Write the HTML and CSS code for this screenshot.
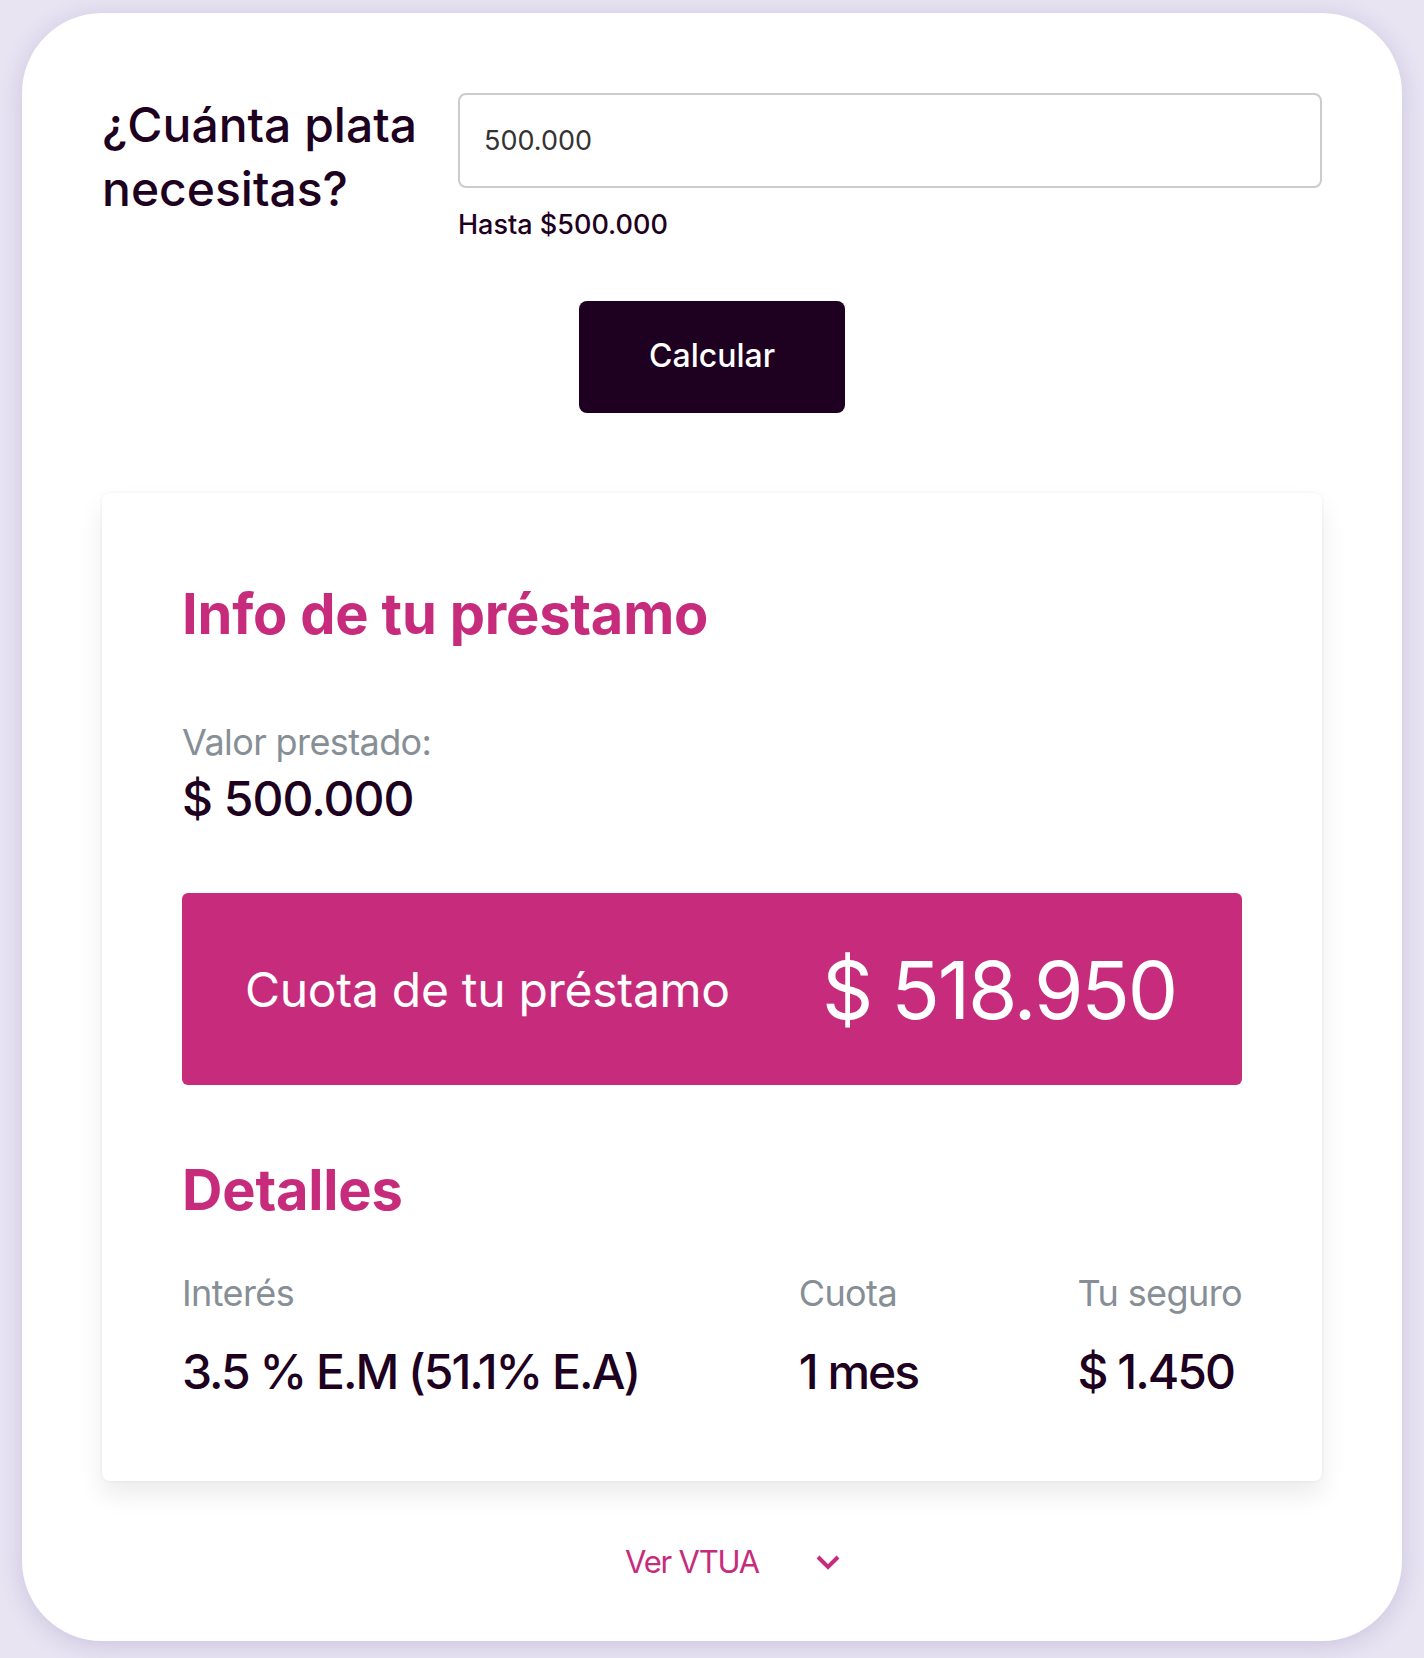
FILE: index.html
```html
<!DOCTYPE html>
<html lang="es">
<head>
    <meta charset="UTF-8">
    <meta name="viewport" content="width=device-width, initial-scale=1.0">
    <title>Simulador de préstamo</title>
    <link rel="stylesheet" href="styles.css">
</head>
<body>
    <div class="simulator">
        <div class="amount-row">
            <h1 class="amount-title">¿Cuánta plata necesitas?</h1>
            <div class="amount-field">
                <input type="text" id="amount" value="500.000">
                <p class="amount-hint">Hasta $500.000</p>
            </div>
        </div>

        <div class="actions">
            <button class="btn-calc">Calcular</button>
        </div>

        <div class="loan-card">
            <h2 class="section-title">Info de tu préstamo</h2>

            <p class="label">Valor prestado:</p>
            <p class="value">$ 500.000</p>

            <div class="installment">
                <span class="installment-label">Cuota de tu préstamo</span>
                <span class="installment-value">$ 518.950</span>
            </div>

            <h2 class="section-title details-title">Detalles</h2>

            <div class="details">
                <div class="detail">
                    <p class="label">Interés</p>
                    <p class="value">3.5 % E.M (51.1% E.A)</p>
                </div>
                <div class="detail">
                    <p class="label">Cuota</p>
                    <p class="value">1 mes</p>
                </div>
                <div class="detail">
                    <p class="label">Tu seguro</p>
                    <p class="value">$ 1.450</p>
                </div>
            </div>
        </div>

        <div class="vtua">
            <span>Ver VTUA</span>
            <svg width="26" height="18" viewBox="0 0 26 18">
                <path d="M3 3 L13 13 L23 3" fill="none" stroke="#c72c7c" stroke-width="4"/>
            </svg>
        </div>
    </div>
</body>
</html>
```

FILE: styles.css
```css
body {
    margin: 0;
    background-color: #e8e4f2;
    font-family: Inter, "Noto Sans", sans-serif;
    color: #1e0020;
}

p {
    margin: 0;
}

.simulator {
    width: 1380px;
    box-sizing: border-box;
    margin: 13px 22px 18px;
    padding: 80px 80px 59px;
    background: white;
    border-radius: 80px;
    box-shadow: 0 4px 24px rgba(90, 70, 150, 0.2);
}

.amount-row {
    display: flex;
}

.amount-title {
    width: 356px;
    margin: 0;
    font-size: 48px;
    line-height: 64px;
    font-weight: 500;
    letter-spacing: 0;
}

.amount-field {
    flex: 1;
}

.amount-field input {
    display: block;
    width: 100%;
    height: 95px;
    box-sizing: border-box;
    padding: 0 24px;
    border: 2px solid #cccccc;
    border-radius: 8px;
    font-family: Inter, sans-serif;
    font-size: 27px;
    color: #333;
}

.amount-hint {
    margin-top: 21px;
    font-size: 27px;
    line-height: 1.2;
    font-weight: 500;
}

.actions {
    display: flex;
    justify-content: center;
    margin-top: 60px;
}

.btn-calc {
    width: 266px;
    height: 112px;
    padding: 0 0 4px;
    background-color: #1e0020;
    color: white;
    border: none;
    border-radius: 8px;
    font-family: Inter, sans-serif;
    font-size: 32px;
    font-weight: 500;
    cursor: pointer;
}

.loan-card {
    margin-top: 80px;
    padding: 88px 80px 81px 80px;
    border-radius: 8px;
    background: white;
    box-shadow: 0 14px 26px rgba(0, 0, 0, 0.08), 0 0 4px rgba(0, 0, 0, 0.06);
}

.section-title {
    margin: 0;
    font-size: 56px;
    line-height: 1.2;
    font-weight: 700;
    color: #c72c7c;
    letter-spacing: -0.2px;
}

.label {
    margin-top: 72px;
    font-size: 36px;
    line-height: 1.2;
    color: #868e96;
    letter-spacing: -0.6px;
}

.value {
    margin-top: 6px;
    font-size: 48px;
    line-height: 1.2;
    font-weight: 500;
    letter-spacing: -1px;
}

.installment {
    display: flex;
    justify-content: space-between;
    align-items: center;
    height: 192px;
    margin-top: 66px;
    padding: 0 66px 0 63px;
    background-color: #c72c7c;
    border-radius: 6px;
    color: white;
}

.installment-label {
    font-size: 48px;
    letter-spacing: -0.3px;
}

.installment-value {
    font-size: 80px;
    letter-spacing: -2.2px;
}

.details-title {
    margin-top: 72px;
}

.details {
    display: flex;
    justify-content: space-between;
    margin-top: 47px;
}

.details .label {
    margin-top: 0;
}

.details .value {
    margin-top: 28px;
    letter-spacing: -2px;
}

.vtua {
    display: flex;
    justify-content: center;
    align-items: center;
    gap: 56px;
    margin-top: 62px;
    padding-left: 42px;
    font-size: 31px;
    line-height: 1.24;
    color: #c72c7c;
    letter-spacing: -1.2px;
}
```
